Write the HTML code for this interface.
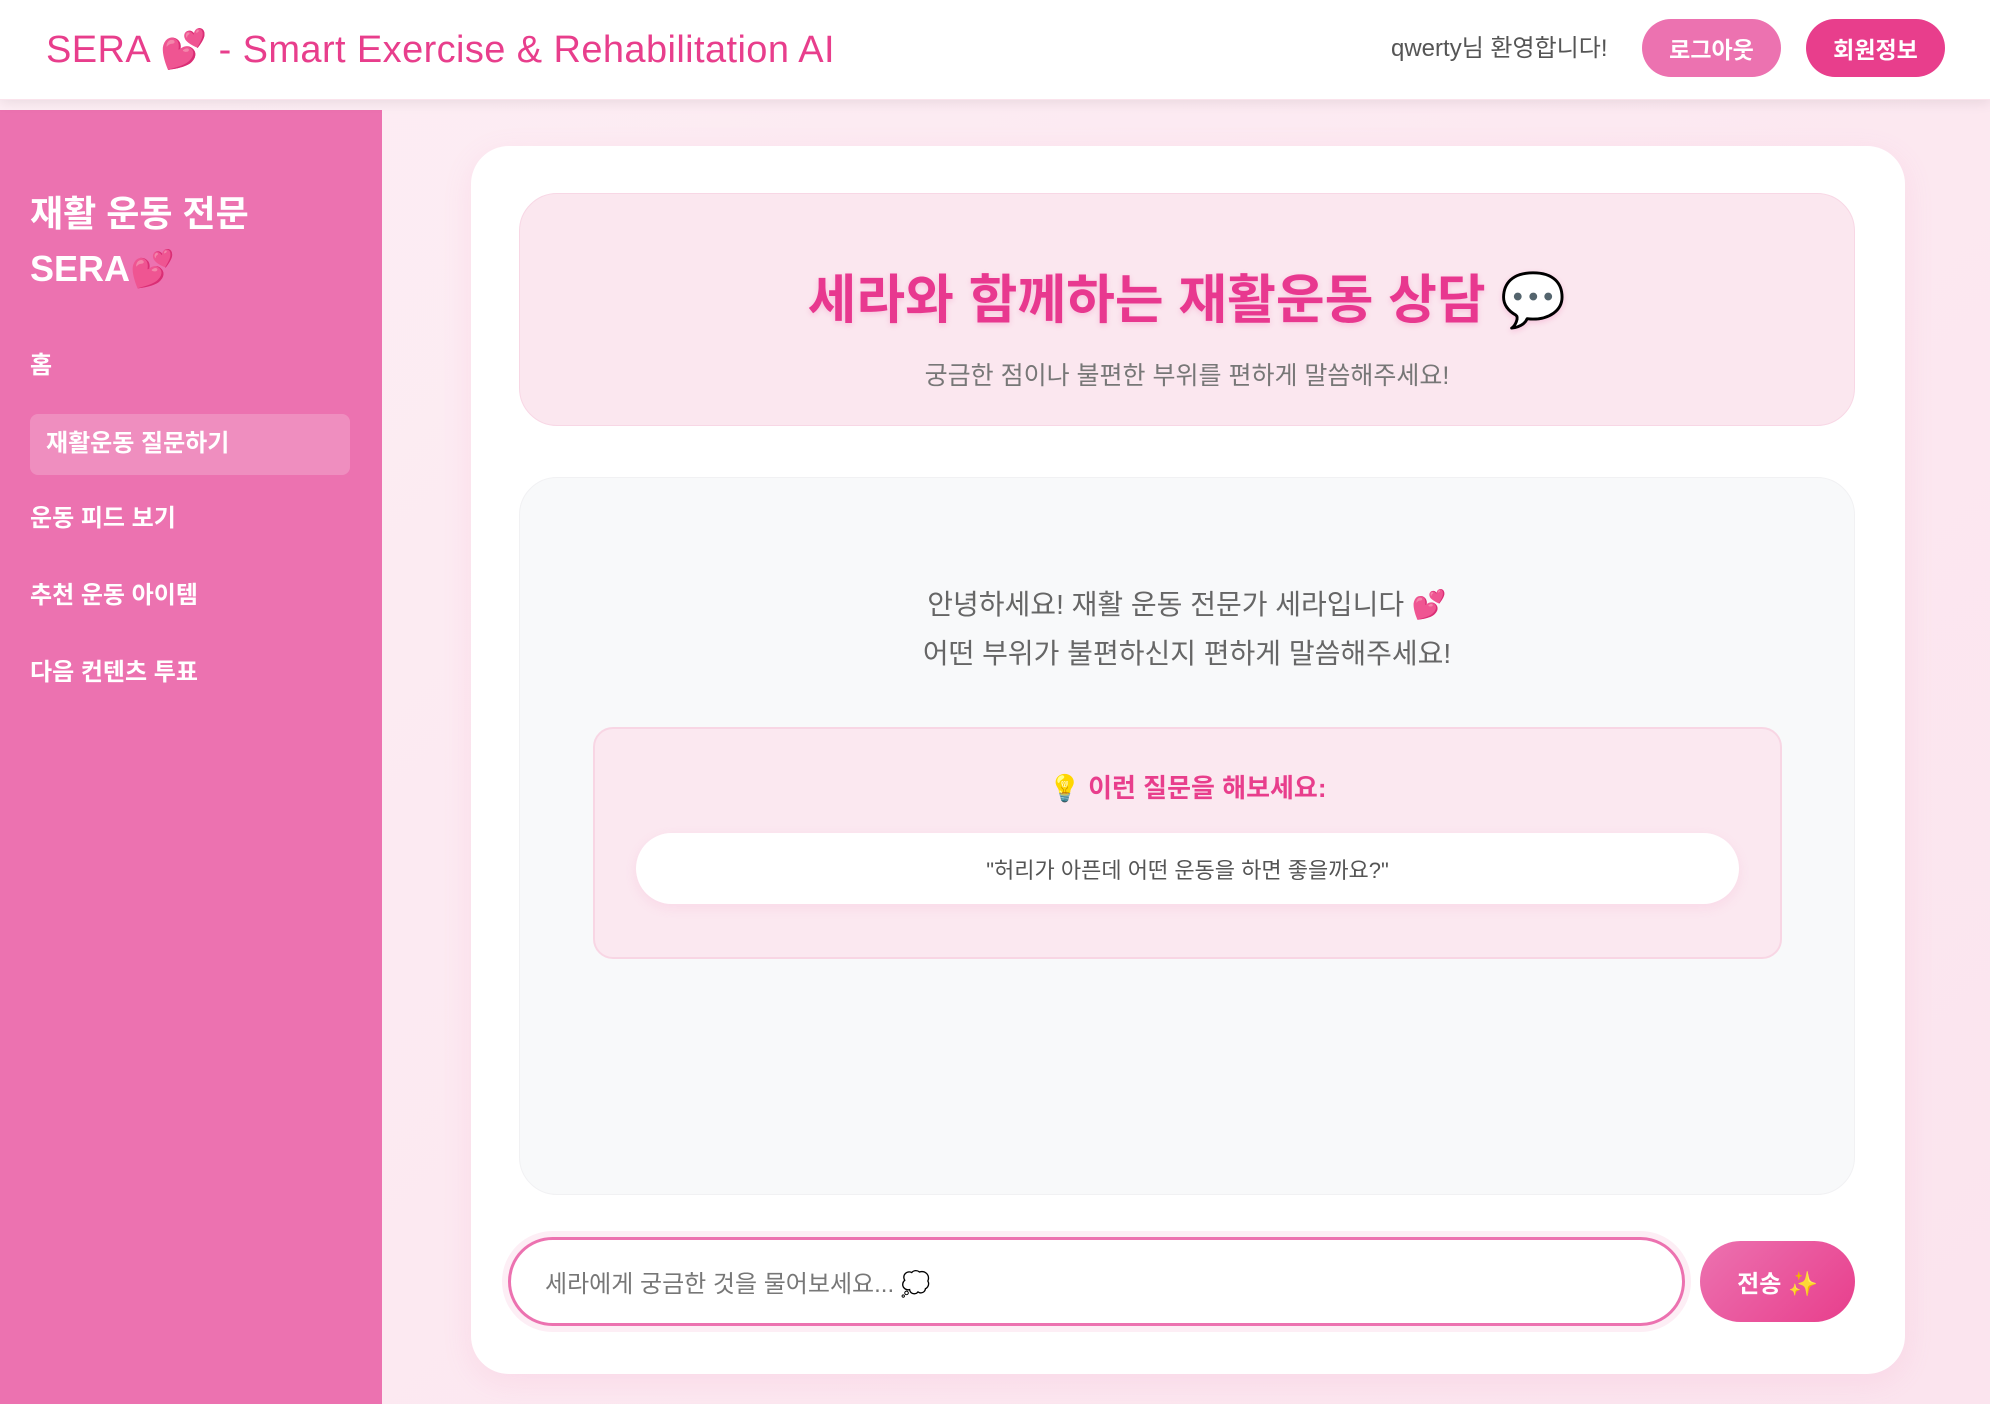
<!DOCTYPE html>
<html><head><meta charset="utf-8"><style>
*{margin:0;padding:0;box-sizing:border-box}
body{width:1990px;height:1404px;overflow:hidden;font-family:"Liberation Sans","Noto Sans CJK KR",sans-serif;background:linear-gradient(135deg,#fdeef4,#fbe4ee);position:relative}
.abs{position:absolute}
.header{left:0;top:0;width:1990px;height:100px;background:#fff;box-shadow:0 3px 12px rgba(0,0,0,0.08);border-bottom:1px solid #fbe3ec;z-index:2}
.logo{left:46px;top:25px;font-size:38px;letter-spacing:0.4px;color:#e83e8c;white-space:nowrap;line-height:50px}
.welcome{left:1391px;top:33px;font-size:24px;color:#555;line-height:32px;white-space:nowrap}
.btn{height:58px;top:19px;border-radius:29px;color:#fff;font-weight:bold;font-size:23px;display:flex;align-items:center;justify-content:center}
.side{left:0;top:110px;width:382px;height:1294px;background:#ec72b0}
.stitle{left:30px;top:186px;font-size:36px;font-weight:bold;color:#fff;line-height:55px}
.nav{left:30px;font-size:24px;font-weight:bold;color:#fff;line-height:32px}
.active{left:30px;top:414px;width:320px;height:61px;background:rgba(255,255,255,0.2);border-radius:8px}
.card{left:471px;top:146px;width:1434px;height:1228px;background:#fff;border-radius:38px;box-shadow:0 8px 30px rgba(236,114,176,0.12)}
.hero{left:519px;top:193px;width:1336px;height:233px;background:#fbe7ef;border:1px solid #f8d7e5;border-radius:38px}
.center{text-align:center;width:100%;left:0}
.chat{left:519px;top:477px;width:1336px;height:718px;background:#f8f9fa;border:1px solid #f1f1f3;border-radius:38px}
.sugg{left:593px;top:727px;width:1189px;height:232px;background:#fbe8f0;border:2px solid #f8d6e4;border-radius:20px}
.pill{left:636px;top:833px;width:1103px;height:71px;background:#fff;border-radius:36px;box-shadow:0 4px 12px rgba(236,114,176,0.12);display:flex;align-items:center;justify-content:center;font-size:22px;color:#555}
.input{left:508px;top:1237px;width:1177px;height:89px;border:3px solid #ec72b0;border-radius:45px;box-shadow:0 0 0 6px #fdeef5;background:#fff;font-size:24px;color:#777;padding-left:34px;display:flex;align-items:center}
.send{left:1700px;top:1241px;width:155px;height:81px;border-radius:41px;background:linear-gradient(135deg,#ec72b0,#e83e8c);color:#fff;font-weight:bold;font-size:24px;display:flex;align-items:center;justify-content:center}
</style></head><body>
<div class="abs header">
<div class="abs logo">SERA 💕 - Smart Exercise &amp; Rehabilitation AI</div>
<div class="abs welcome">qwerty님 환영합니다!</div>
<div class="abs btn" style="left:1642px;width:139px;background:#ec72b0">로그아웃</div>
<div class="abs btn" style="left:1806px;width:139px;background:#e83e8c">회원정보</div>
</div>
<div class="abs side"></div>
<div class="abs stitle">재활 운동 전문<br>SERA💕</div>
<div class="abs nav" style="top:350px">홈</div>
<div class="abs active"></div>
<div class="abs nav" style="left:46px;top:428px">재활운동 질문하기</div>
<div class="abs nav" style="top:503px">운동 피드 보기</div>
<div class="abs nav" style="top:580px">추천 운동 아이템</div>
<div class="abs nav" style="top:657px">다음 컨텐츠 투표</div>
<div class="abs card"></div>
<div class="abs hero">
<div class="abs center" style="top:75px;font-size:53px;font-weight:bold;color:#e8388f;line-height:64px;text-shadow:0 2px 6px rgba(232,56,143,0.2)">세라와 함께하는 재활운동 상담 💬</div>
<div class="abs center" style="top:165px;font-size:25px;color:#777;line-height:34px">궁금한 점이나 불편한 부위를 편하게 말씀해주세요!</div>
</div>
<div class="abs chat">
<div class="abs center" style="top:102px;font-size:28px;color:#666;line-height:49px">안녕하세요! 재활 운동 전문가 세라입니다 💕<br>어떤 부위가 불편하신지 편하게 말씀해주세요!</div>
</div>
<div class="abs sugg">
<div class="abs center" style="top:42px;font-size:26px;font-weight:bold;color:#e83e8c;line-height:34px">💡 이런 질문을 해보세요:</div>
</div>
<div class="abs pill">"허리가 아픈데 어떤 운동을 하면 좋을까요?"</div>
<div class="abs input">세라에게 궁금한 것을 물어보세요... 💭</div>
<div class="abs send">전송 ✨</div>
</body></html>
